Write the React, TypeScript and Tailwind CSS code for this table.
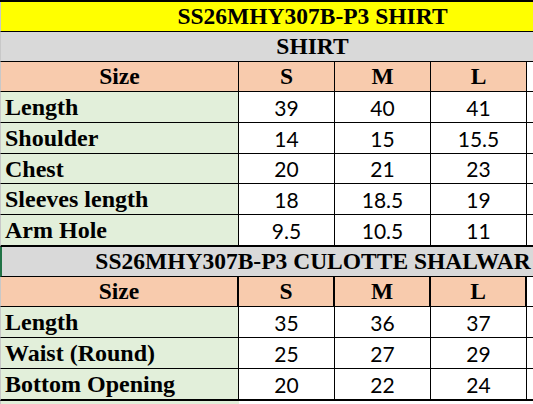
import React from 'react';

const serif = "font-['Liberation_Serif','Times_New_Roman',serif] font-bold text-[23.5px] leading-none text-black";
const label = "font-['Liberation_Serif','Times_New_Roman',serif] font-bold text-[24px] leading-none text-black";
const sans = "font-['Lato','Liberation_Sans',sans-serif] text-[21px] leading-none text-black";

type Row = { label: string; vals: string[]; h: string };

const shirtRows: Row[] = [
  { label: 'Length', vals: ['39', '40', '41'], h: 'h-[31px] border-b' },
  { label: 'Shoulder', vals: ['14', '15', '15.5'], h: 'h-[31px] border-b' },
  { label: 'Chest', vals: ['20', '21', '23'], h: 'h-[30px] border-b' },
  { label: 'Sleeves length', vals: ['18', '18.5', '19'], h: 'h-[31px] border-b' },
  { label: 'Arm Hole', vals: ['9.5', '10.5', '11'], h: 'h-[32px] border-b-2' },
];

const culotteRows: Row[] = [
  { label: 'Length', vals: ['35', '36', '37'], h: 'h-[31px] border-b' },
  { label: 'Waist (Round)', vals: ['25', '27', '29'], h: 'h-[31px] border-b' },
  { label: 'Bottom Opening', vals: ['20', '22', '24'], h: 'h-[32px] border-b-2' },
];

const TitleRow = ({ text, cls, left }: { text: string; cls: string; left?: string }) => (
  <div className={`flex items-center justify-center h-[30px] border-b border-black border-l ${left ?? 'border-l-[#c8c8c8]'} ${cls}`}>
    <span className={serif}>{text}</span>
  </div>
);

const SizeHeader = ({ thick }: { thick?: boolean }) => {
  const b = thick ? 'border-r-2' : 'border-r';
  return (
    <div className="flex h-[30px] border-b border-black border-l border-l-[#c8c8c8]">
      <div className={`w-[238px] ${b} border-black bg-[#F8CBAD] flex items-center justify-center`}>
        <span className={serif}>Size</span>
      </div>
      {['S', 'M', 'L'].map(s => (
        <div key={s} className={`w-[96px] ${b} border-black bg-[#F8CBAD] flex items-center justify-center`}>
          <span className={serif}>{s}</span>
        </div>
      ))}
      <div className="w-[96px] border-r border-black bg-white" />
    </div>
  );
};

const DataRow = ({ row }: { row: Row }) => (
  <div className={`flex ${row.h} border-black border-l border-l-[#c8c8c8]`}>
    <div className="w-[238px] border-r border-black bg-[#E2EFDA] flex items-center pl-1">
      <span className={label}>{row.label}</span>
    </div>
    {row.vals.map((v, i) => (
      <div key={i} className="w-[96px] border-r border-black bg-white flex items-center justify-center">
        <span className={sans}>{v}</span>
      </div>
    ))}
    <div className="w-[96px] border-r border-black bg-white" />
  </div>
);

export default function App() {
  return (
    <div className="w-[533px] h-[404px] overflow-hidden bg-white">
      <div className="w-[640px]">
        <div className="h-[2px] bg-black" />
        <div className="w-[624px]">
          <TitleRow text="SS26MHY307B-P3 SHIRT" cls="bg-[#FFFF00]" />
          <TitleRow text="SHIRT" cls="bg-[#D9D9D9]" />
          <SizeHeader />
          {shirtRows.map(r => <DataRow key={r.label} row={r} />)}
          <TitleRow text="SS26MHY307B-P3 CULOTTE SHALWAR" cls="bg-[#D9D9D9]" left="border-l-2 border-l-[#217346]" />
          <SizeHeader thick />
          {culotteRows.map(r => <DataRow key={r.label} row={r} />)}
          <div className="flex h-[10px] border-l border-l-[#c8c8c8]">
            <div className="w-[238px] bg-[#E2EFDA]" />
          </div>
        </div>
      </div>
    </div>
  );
}
